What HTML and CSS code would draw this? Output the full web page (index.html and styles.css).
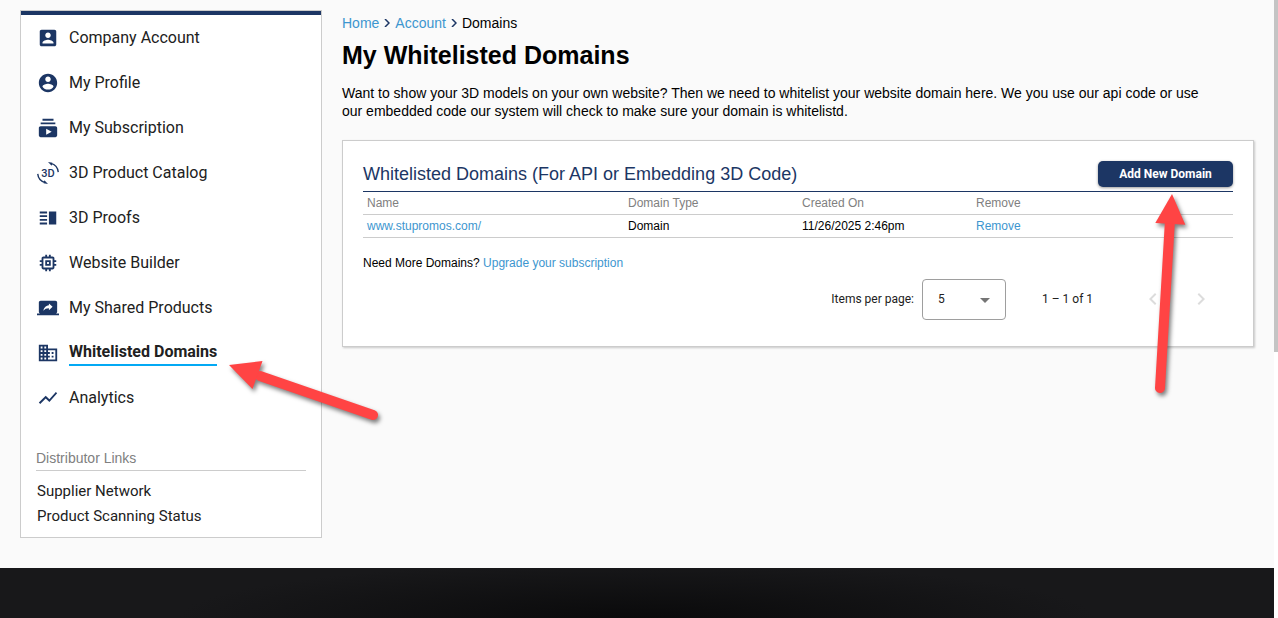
FILE: index.html
```html
<!DOCTYPE html>
<html lang="en">
<head>
    <meta charset="UTF-8">
    <meta name="viewport" content="width=device-width, initial-scale=1.0">
    <title>My Whitelisted Domains</title>
    <link rel="stylesheet" href="styles.css">
</head>
<body>
    <div class="page">
        <div class="content">
            <aside class="sidebar">
                <nav class="menu">
                    <a href="#" class="menu-item">
                        <svg class="icon" viewBox="0 0 24 24"><path d="M3 5v14c0 1.1.89 2 2 2h14c1.1 0 2-.9 2-2V5c0-1.100-.9-2-2-2H5c-1.110 0-2 .9-2 2zm12 4c0 1.660-1.340 3-3 3s-3-1.340-3-3 1.340-3 3-3 3 1.340 3 3zm-9 8c0-2 4-3.100 6-3.100s6 1.100 6 3.100v1H6v-1z"/></svg>
                        <span>Company Account</span>
                    </a>
                    <a href="#" class="menu-item">
                        <svg class="icon" viewBox="0 0 24 24"><path d="M12 2C6.480 2 2 6.480 2 12s4.480 10 10 10 10-4.480 10-10S17.520 2 12 2zm0 3c1.660 0 3 1.340 3 3s-1.340 3-3 3-3-1.340-3-3 1.340-3 3-3zm0 14.200c-2.500 0-4.710-1.280-6-3.220.03-1.990 4-3.080 6-3.080 1.990 0 5.970 1.090 6 3.080-1.290 1.940-3.500 3.220-6 3.220z"/></svg>
                        <span>My Profile</span>
                    </a>
                    <a href="#" class="menu-item">
                        <svg class="icon" viewBox="0 0 24 24"><path d="M20 8H4V6h16v2zm-2-6H6v2h12V2zm4 10v8c0 1.100-.9 2-2 2H4c-1.100 0-2-.9-2-2v-8c0-1.100.9-2 2-2h16c1.100 0 2 .9 2 2zm-6 4l-6-3.270v6.530L16 16z"/></svg>
                        <span>My Subscription</span>
                    </a>
                    <a href="#" class="menu-item">
                        <svg class="icon" viewBox="0 0 24 24">
                            <path class="icon-line" d="M15 1.500A11 11 0 0 1 23.200 11M9 22.500A11 11 0 0 1 .8 13"/>
                            <path d="M12 0l4.800.8-.8 3.200zM12 24l-4.800-.8.8-3.200z"/>
                            <text x="12" y="16" class="icon-text">3D</text>
                        </svg>
                        <span>3D Product Catalog</span>
                    </a>
                    <a href="#" class="menu-item">
                        <svg class="icon" viewBox="0 0 24 24"><path d="M3 15h8v-2H3v2zm0 4h8v-2H3v2zm0-8h8V9H3v2zm0-6v2h8V5H3zm10 0h8v14h-8V5z"/></svg>
                        <span>3D Proofs</span>
                    </a>
                    <a href="#" class="menu-item">
                        <svg class="icon" viewBox="0 0 24 24"><path d="M15 9H9v6h6V9zm-2 4h-2v-2h2v2zm8-2V9h-2V7c0-1.100-.9-2-2-2h-2V3h-2v2h-2V3H9v2H7c-1.100 0-2 .9-2 2v2H3v2h2v2H3v2h2v2c0 1.100.9 2 2 2h2v2h2v-2h2v2h2v-2h2c1.100 0 2-.9 2-2v-2h2v-2h-2v-2h2zm-4 6H7V7h10v10z"/></svg>
                        <span>Website Builder</span>
                    </a>
                    <a href="#" class="menu-item">
                        <svg class="icon" viewBox="0 0 24 24"><path d="M20 18c1.100 0 1.990-.9 1.990-2L22 6c0-1.110-.9-2-2-2H4c-1.110 0-2 .89-2 2v10c0 1.100.89 2 2 2H0v2h24v-2h-4zm-7-3.530v-2.190c-2.780 0-4.610.85-6 2.720.56-2.670 2.110-5.330 6-5.870V7l4 3.730-4 3.740z"/></svg>
                        <span>My Shared Products</span>
                    </a>
                    <a href="#" class="menu-item active">
                        <svg class="icon" viewBox="0 0 24 24"><path d="M12 7V3H2v18h20V7H12zM6 19H4v-2h2v2zm0-4H4v-2h2v2zm0-4H4V9h2v2zm0-4H4V5h2v2zm4 12H8v-2h2v2zm0-4H8v-2h2v2zm0-4H8V9h2v2zm0-4H8V5h2v2zm10 12h-8v-2h2v-2h-2v-2h2v-2h-2V9h8v10zm-2-8h-2v2h2v-2zm0 4h-2v2h2v-2z"/></svg>
                        <span>Whitelisted Domains</span>
                    </a>
                    <a href="#" class="menu-item">
                        <svg class="icon" viewBox="0 0 24 24"><path d="M3.500 18.490l6-6.010 4 4L22 6.920l-1.410-1.410-7.090 7.970-4-4L2 16.990z"/></svg>
                        <span>Analytics</span>
                    </a>
                </nav>
                <h2 class="links-title">Distributor Links</h2>
                <nav class="links">
                    <a href="#">Supplier Network</a>
                    <a href="#">Product Scanning Status</a>
                </nav>
            </aside>

            <main class="main">
                <nav class="breadcrumb">
                    <a href="#">Home</a>
                    <svg class="crumb-arrow" viewBox="0 0 6 8"><path d="M1 0l4 4-4 4"/></svg>
                    <a href="#">Account</a>
                    <svg class="crumb-arrow" viewBox="0 0 6 8"><path d="M1 0l4 4-4 4"/></svg>
                    <span>Domains</span>
                </nav>
                <h1>My Whitelisted Domains</h1>
                <p class="intro">Want to show your 3D models on your own website? Then we need to whitelist your website domain here. We you use our api code or use our embedded code our system will check to make sure your domain is whitelistd.</p>

                <section class="card">
                    <div class="card-header">
                        <h2>Whitelisted Domains (For API or Embedding 3D Code)</h2>
                        <button type="button" class="add-button">Add New Domain</button>
                    </div>
                    <table class="domains">
                        <thead>
                            <tr>
                                <th class="col-wide">Name</th>
                                <th>Domain Type</th>
                                <th>Created On</th>
                                <th class="col-wide">Remove</th>
                            </tr>
                        </thead>
                        <tbody>
                            <tr>
                                <td><a href="#">www.stupromos.com/</a></td>
                                <td>Domain</td>
                                <td>11/26/2025 2:46pm</td>
                                <td><a href="#">Remove</a></td>
                            </tr>
                        </tbody>
                    </table>
                    <p class="more">Need More Domains? <a href="#">Upgrade your subscription</a></p>
                    <div class="paginator">
                        <label for="pageSize">Items per page:</label>
                        <div class="select-wrap">
                            <select id="pageSize">
                                <option selected>5</option>
                                <option>10</option>
                                <option>25</option>
                            </select>
                            <svg class="select-arrow" viewBox="0 0 10 5"><path d="M0 0h10L5 5z"/></svg>
                        </div>
                        <span class="range">1 – 1 of 1</span>
                        <button type="button" class="page-button" aria-label="Previous page" disabled>
                            <svg viewBox="0 0 24 24"><path d="M15.410 7.410L14 6l-6 6 6 6 1.410-1.410L10.830 12z"/></svg>
                        </button>
                        <button type="button" class="page-button" aria-label="Next page" disabled>
                            <svg viewBox="0 0 24 24"><path d="M10 6L8.590 7.410 13.170 12l-4.580 4.590L10 18l6-6z"/></svg>
                        </button>
                    </div>
                </section>
            </main>
        </div>

        <footer class="footer"></footer>

        <!-- callout arrows -->
        <svg class="callout callout-menu" viewBox="0 0 160 70">
            <path class="shaft" d="M30 16L143 55"/>
            <path d="M-1 5L32.500 1 22.500 29z"/>
        </svg>
        <svg class="callout callout-button" viewBox="0 0 40 210">
            <path class="shaft" d="M20 30L10 198"/>
            <path d="M22 4L5.300 33 35.300 34.700z"/>
        </svg>
    </div>
    <div class="scroll-track">
        <div class="scroll-thumb"></div>
    </div>
</body>
</html>
```
FILE: styles.css
```css
* {
    box-sizing: border-box;
}

body {
    display: flex;
    min-height: 100vh;
    margin: 0;
    background: #fafafa;
    color: #000;
    font-family: Arial, "Liberation Sans", sans-serif;
    font-size: 14px;
}

a {
    color: #3d96cf;
    text-decoration: none;
}

h1, h2, p {
    margin: 0;
}

.page {
    position: relative;
    display: flex;
    flex-direction: column;
    flex: 1;
    min-width: 0;
}

.content {
    display: flex;
    align-items: flex-start;
    gap: 20px;
    padding: 10px 20px 30px;
}

/* Sidebar */
.sidebar {
    flex: 0 0 302px;
    padding-bottom: 8px;
    background: #fff;
    border: 1px solid #ccc;
}

.menu {
    border-top: 4px solid #1c3664;
    padding: 0 16px;
}

.menu-item {
    display: flex;
    align-items: center;
    gap: 10px;
    height: 45px;
    color: #212121;
    font-family: Roboto, sans-serif;
    font-size: 16px;
}

.menu-item.active {
    font-weight: bold;
}

.menu-item.active span {
    border-bottom: 2px solid #03a9f4;
    line-height: 24px;
}

.icon {
    width: 22px;
    height: 22px;
    fill: #1c3664;
    overflow: visible;
}

.icon-line {
    fill: none;
    stroke: #1c3664;
    stroke-width: 1.5;
}

.icon-text {
    font-size: 12px;
    font-weight: 500;
    text-anchor: middle;
}

.links-title {
    margin: 28px 15px 0;
    padding-bottom: 2px;
    border-bottom: 1px solid #ccc;
    color: #808080;
    font-size: 14px;
    font-weight: normal;
    line-height: 20px;
}

.links {
    display: flex;
    flex-direction: column;
    padding: 8px 16px 0;
}

.links a {
    color: #212121;
    font-family: Roboto, sans-serif;
    font-size: 15px;
    line-height: 25px;
}

/* Main column */
.main {
    flex: 1;
    min-width: 0;
}

.breadcrumb {
    display: flex;
    align-items: center;
    gap: 5px;
    line-height: 26px;
}

.crumb-arrow {
    width: 6px;
    height: 8px;
    fill: none;
    stroke: #1c3664;
    stroke-width: 1.5;
}

h1 {
    font-size: 25px;
    line-height: 38px;
}

.intro {
    padding: 10px 40px 20px 0;
    line-height: 18px;
}

.card {
    padding: 20px;
    background: #fff;
    border: 1px solid #ccc;
    box-shadow: 1px 1px 2px rgba(0, 0, 0, 0.2);
}

.card-header {
    display: flex;
    align-items: center;
    justify-content: space-between;
    padding-bottom: 4px;
    border-bottom: 1px solid #1c3664;
}

.card-header h2 {
    color: #1c3664;
    font-size: 18px;
    font-weight: normal;
}

.add-button {
    width: 135px;
    height: 26px;
    padding: 0;
    background: #1c3664;
    border: none;
    border-radius: 5px;
    box-shadow: 0 1px 3px rgba(0, 0, 0, 0.4);
    color: #fff;
    font-family: Roboto, sans-serif;
    font-size: 12px;
    font-weight: bold;
}

.domains {
    width: 100%;
    border-collapse: separate;
    border-spacing: 0;
    table-layout: fixed;
    font-size: 12px;
}

.domains th,
.domains td {
    width: 20%;
    height: 23px;
    padding: 0 4px;
    border-bottom: 1px solid #ccc;
    text-align: left;
}

.domains .col-wide {
    width: 30%;
}

.domains th {
    color: #808080;
    font-weight: normal;
}

.more {
    padding-top: 16px;
    font-size: 12px;
    line-height: 18px;
}

.paginator {
    display: flex;
    align-items: center;
    justify-content: flex-end;
    height: 54px;
    padding-right: 8px;
    color: #212121;
    font-family: Roboto, sans-serif;
    font-size: 12px;
}

.select-wrap {
    position: relative;
    margin: 0 36px 0 8px;
}

.select-wrap select {
    display: block;
    width: 84px;
    height: 41px;
    padding: 0 15px;
    appearance: none;
    background: #fff;
    border: 1px solid #9e9e9e;
    border-radius: 4px;
    color: inherit;
    font: inherit;
}

.select-arrow {
    position: absolute;
    top: 19px;
    right: 16px;
    width: 10px;
    height: 5px;
    fill: #757575;
    pointer-events: none;
}

.range {
    min-width: 55px;
    margin-right: 32px;
}

.page-button {
    display: flex;
    align-items: center;
    justify-content: center;
    width: 48px;
    height: 48px;
    padding: 0;
    background: none;
    border: none;
}

.page-button svg {
    width: 24px;
    height: 24px;
    fill: #dcdcdc;
}

/* Footer */
.footer {
    flex: 1;
    min-height: 50px;
    background: radial-gradient(ellipse 36% 56px at 50% 100%, #0a0a0b, #18181a);
}

/* Callout arrows */
.callout {
    position: absolute;
    fill: #ff4444;
    filter: drop-shadow(2px 3px 2px rgba(0, 0, 0, 0.5));
    overflow: visible;
    pointer-events: none;
}

.shaft {
    stroke: #ff4444;
    stroke-width: 10;
    stroke-linecap: round;
}

.callout-menu {
    top: 360px;
    left: 230px;
    width: 160px;
    height: 70px;
}

.callout-button {
    top: 190px;
    right: 84px;
    width: 40px;
    height: 210px;
}

/* Scrollbar */
.scroll-track {
    width: 4px;
    background: #fff;
}

.scroll-thumb {
    height: 57%;
    background: #c4c4c4;
}
```
